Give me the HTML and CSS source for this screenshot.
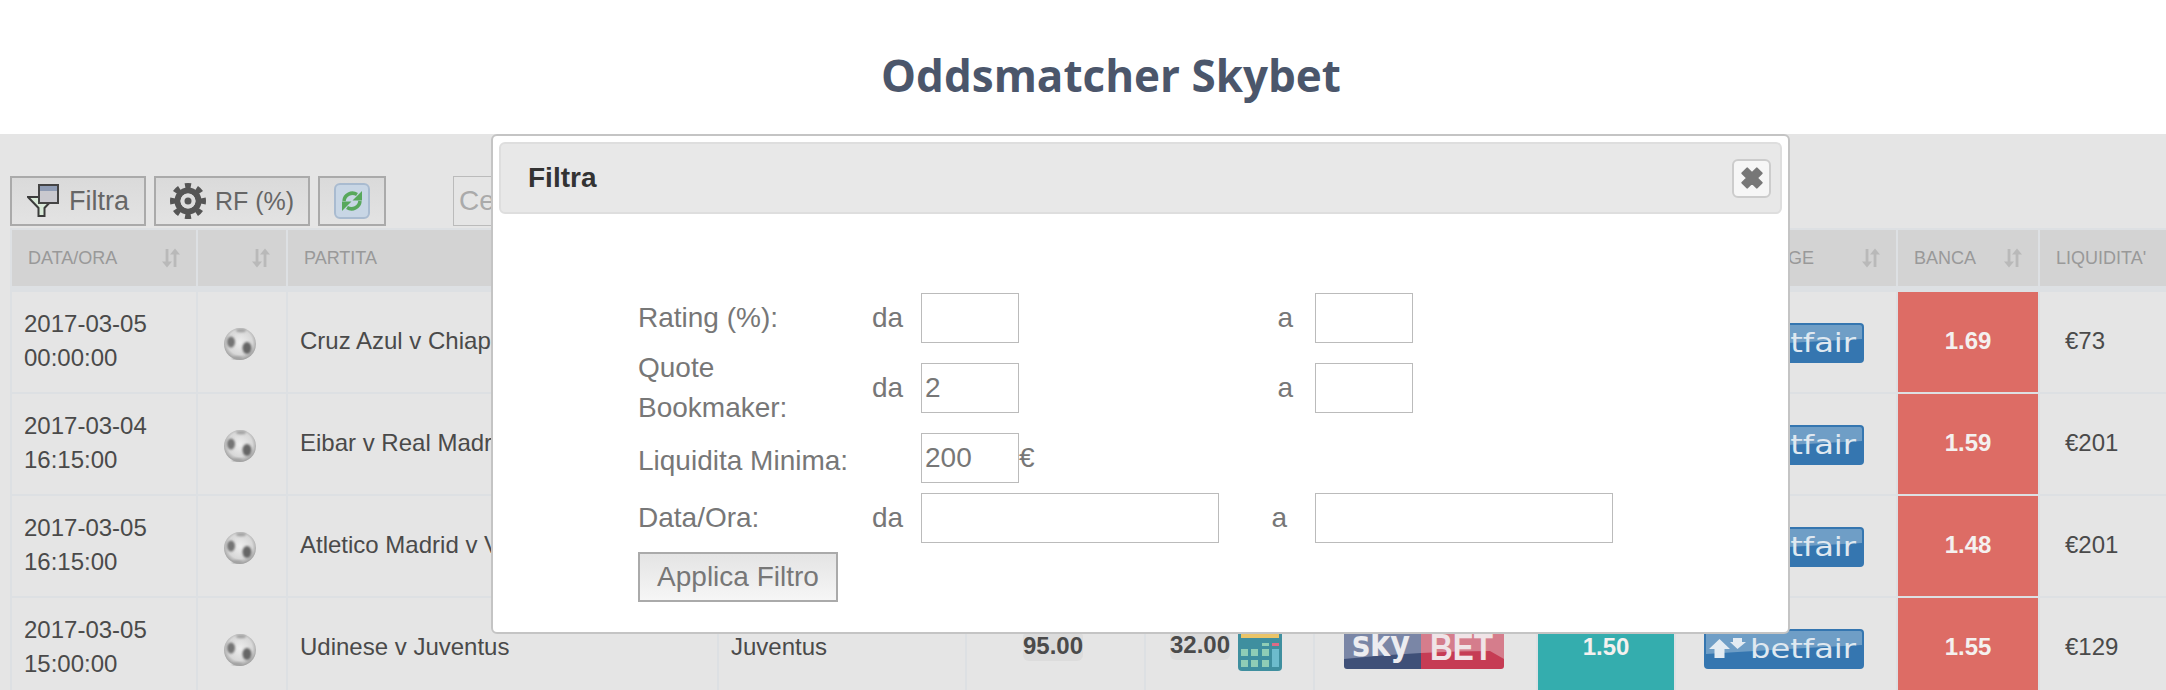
FILE: index.html
```html
<!DOCTYPE html>
<html lang="it">
<head>
<meta charset="utf-8">
<title>Oddsmatcher Skybet</title>
<link rel="stylesheet" href="styles.css">
</head>
<body>
<svg class="defs" width="0" height="0" aria-hidden="true">
  <defs>
    <radialGradient id="ballFill" cx="50%" cy="45%" r="55%">
      <stop offset="0" stop-color="#eeeeee"/>
      <stop offset="0.7" stop-color="#d8d8d8"/>
      <stop offset="1" stop-color="#9c9c9c"/>
    </radialGradient>
    <filter id="soft" x="-30%" y="-30%" width="160%" height="160%"><feGaussianBlur stdDeviation="1"/></filter>
    <symbol id="ball" viewBox="0 0 32 32">
      <circle cx="16" cy="16" r="16" fill="url(#ballFill)"/>
      <g filter="url(#soft)">
        <ellipse cx="7" cy="14" rx="4" ry="5.500" fill="#747474"/>
        <ellipse cx="23" cy="20" rx="4.500" ry="6" fill="#666"/>
        <ellipse cx="17" cy="2.500" rx="5" ry="1.800" fill="#a0a0a0"/>
        <ellipse cx="13" cy="30" rx="5" ry="1.600" fill="#a0a0a0"/>
      </g>
    </symbol>
    <symbol id="sort" viewBox="0 0 18 20">
      <path d="M3.600 1h2.800v12.500H10L5 19.500 0 13.500h3.600z" fill="#b9b9b9"/>
      <path d="M11.600 19h2.800V6.500H18L13 .5 8 6.500h3.600z" fill="#b9b9b9"/>
    </symbol>
    <symbol id="betfair" viewBox="0 0 160 40">
      <rect width="160" height="40" rx="4" fill="#3576b0"/>
      <path d="M2 2h154q2 0 2 2v12q-78 4-156 9z" fill="#6f9ec6"/>
      <path d="M15.500 10 26 20h-5.500v9h-10v-9H5z" fill="#e3ebf2"/>
      <path d="M29 9h9v4h4l-8.500 7L26 13h3z" fill="#e3ebf2"/>
      <text class="logo-bf" x="46" y="29" textLength="106" lengthAdjust="spacingAndGlyphs">betfair</text>
    </symbol>
    <symbol id="skybet" viewBox="0 0 160 40">
      <path d="M0 0h77v40H3q-3 0-3-3z" fill="#3f5078"/>
      <path d="M77 0h83v37q0 3-3 3H77z" fill="#c63c54"/>
      <path d="M0 0h77v24q-40 2-77 6z" fill="#7a86a6"/>
      <path d="M77 0h83v30l-14-8q-34 0-69 2z" fill="#d57d8c"/>
      <text class="logo-sky" x="8" y="27" textLength="58" lengthAdjust="spacingAndGlyphs">sky</text>
      <text class="logo-bet" x="86" y="31" textLength="63" lengthAdjust="spacingAndGlyphs">BET</text>
    </symbol>
  </defs>
</svg>

<header class="page-head">
  <h1 class="page-title">Oddsmatcher Skybet</h1>
</header>

<main class="content">
  <div class="toolbar">
    <button class="tool-btn tool-filter" type="button">
      <svg class="icon-funnel" width="32" height="34" viewBox="0 0 32 34">
        <path d="M1 13h27L17.500 24v8h-6v-8z" fill="#d9ead9" stroke="#3c3c3c" stroke-width="2"/>
        <rect x="12" y="1" width="19" height="18" fill="#c9c9cf" stroke="#444" stroke-width="2"/>
        <rect x="13" y="2" width="17" height="5" fill="#8f9cb4"/>
      </svg>
      <span>Filtra</span>
    </button>
    <button class="tool-btn tool-rf" type="button">
      <svg class="icon-gear" width="36" height="36" viewBox="0 0 36 36">
        <circle cx="18" cy="18" r="15.500" fill="none" stroke="#555" stroke-width="5" pathLength="80" stroke-dasharray="5 5" stroke-dashoffset="2.500"/>
        <circle cx="18" cy="18" r="10.500" fill="none" stroke="#555" stroke-width="6"/>
        <circle cx="18" cy="18" r="7.500" fill="#ddd"/>
        <circle cx="18" cy="18" r="3.500" fill="#555"/>
      </svg>
      <span>RF (%)</span>
    </button>
    <button class="tool-btn tool-refresh" type="button" aria-label="Aggiorna">
      <svg width="36" height="36" viewBox="0 0 36 36">
        <rect x="1" y="1" width="34" height="34" rx="5" fill="#c8d6e5" stroke="#a9bbd0" stroke-width="2"/>
        <g id="refreshHalf">
          <path d="M10 18A8.500 8.500 0 0 1 23 11.500" fill="none" stroke="#58a85c" stroke-width="3.500"/>
          <path d="M28 8v9.500h-9.500z" fill="#58a85c"/>
        </g>
        <use href="#refreshHalf" transform="rotate(180 18 18)"/>
      </svg>
    </button>
    <input class="search" type="text" placeholder="Cerca">
  </div>

  <table class="odds-table">
    <colgroup>
      <col class="c-date"><col class="c-sport"><col class="c-match"><col class="c-pick"><col class="c-back"><col class="c-lay"><col class="c-book"><col class="c-quote"><col class="c-exch"><col class="c-bank"><col class="c-liq">
    </colgroup>
    <thead>
      <tr>
        <th><div class="th-in"><span>DATA/ORA</span><svg class="sort"><use href="#sort"/></svg></div></th>
        <th><div class="th-in th-end"><svg class="sort"><use href="#sort"/></svg></div></th>
        <th><div class="th-in"><span>PARTITA</span></div></th>
        <th></th>
        <th></th>
        <th></th>
        <th></th>
        <th></th>
        <th><div class="th-in th-exch"><span>EXCHANGE</span><svg class="sort"><use href="#sort"/></svg></div></th>
        <th><div class="th-in"><span>BANCA</span><svg class="sort"><use href="#sort"/></svg></div></th>
        <th><div class="th-in"><span>LIQUIDITA'</span></div></th>
      </tr>
    </thead>
    <tbody>
      <tr>
        <td>2017-03-05<br>00:00:00</td>
        <td class="td-ball"><svg class="ball"><use href="#ball"/></svg></td>
        <td>Cruz Azul v Chiapas</td>
        <td></td><td></td><td></td><td></td><td></td>
        <td class="td-logo"><svg class="logo"><use href="#betfair"/></svg></td>
        <td class="td-bank">1.69</td>
        <td class="td-liq">€73</td>
      </tr>
      <tr>
        <td>2017-03-04<br>16:15:00</td>
        <td class="td-ball"><svg class="ball"><use href="#ball"/></svg></td>
        <td>Eibar v Real Madrid</td>
        <td></td><td></td><td></td><td></td><td></td>
        <td class="td-logo"><svg class="logo"><use href="#betfair"/></svg></td>
        <td class="td-bank">1.59</td>
        <td class="td-liq">€201</td>
      </tr>
      <tr>
        <td>2017-03-05<br>16:15:00</td>
        <td class="td-ball"><svg class="ball"><use href="#ball"/></svg></td>
        <td>Atletico Madrid v Valencia</td>
        <td></td><td></td><td></td><td></td><td></td>
        <td class="td-logo"><svg class="logo"><use href="#betfair"/></svg></td>
        <td class="td-bank">1.48</td>
        <td class="td-liq">€201</td>
      </tr>
      <tr>
        <td>2017-03-05<br>15:00:00</td>
        <td class="td-ball"><svg class="ball"><use href="#ball"/></svg></td>
        <td>Udinese v Juventus</td>
        <td>Juventus</td>
        <td class="td-back"><span class="odds">95.00</span></td>
        <td class="td-lay">
          <div class="lay-in">
            <span class="odds">32.00</span>
            <svg class="calc" viewBox="0 0 44 44">
              <rect width="44" height="44" rx="4" fill="#3f8f9f"/>
              <rect x="3" y="3" width="38" height="8" fill="#eac468"/>
              <rect x="24" y="16" width="7" height="3" fill="#8fcdb6"/>
              <rect x="34" y="16" width="7" height="3" fill="#dd6b86"/>
              <rect x="3" y="22" width="7" height="7" fill="#8fcdb6"/>
              <rect x="13" y="22" width="7" height="7" fill="#8fcdb6"/>
              <rect x="24" y="22" width="7" height="7" fill="#8fcdb6"/>
              <rect x="3" y="33" width="7" height="7" fill="#8fcdb6"/>
              <rect x="13" y="33" width="7" height="7" fill="#8fcdb6"/>
              <rect x="24" y="33" width="7" height="7" fill="#8fcdb6"/>
              <rect x="34" y="22" width="7" height="18" fill="#6dbccd"/>
            </svg>
          </div>
        </td>
        <td class="td-sky"><svg class="logo"><use href="#skybet"/></svg></td>
        <td class="td-quote">1.50</td>
        <td class="td-logo"><svg class="logo"><use href="#betfair"/></svg></td>
        <td class="td-bank">1.55</td>
        <td class="td-liq">€129</td>
      </tr>
    </tbody>
  </table>
</main>

<section class="modal">
  <div class="modal-bar">
    <h2 class="modal-title">Filtra</h2>
    <button class="modal-close" type="button" aria-label="Chiudi">
      <svg width="22" height="22" viewBox="2 2 16 16"><path d="M3 6.500 6.500 3 10 6.500 13.500 3 17 6.500 13.500 10 17 13.500 13.500 17 10 13.500 6.500 17 3 13.500 6.500 10z" fill="#777" stroke="#777" stroke-width="1.500" stroke-linejoin="round"/></svg>
    </button>
  </div>
  <form class="modal-body">
    <div class="filter-grid">
      <span>Rating (%):</span>
      <span>da</span>
      <span class="cell-mid"><input class="fld fld-s" type="text"><span class="to">a</span></span>
      <input class="fld fld-s" type="text">

      <span>Quote<br>Bookmaker:</span>
      <span>da</span>
      <span class="cell-mid"><input class="fld fld-s" type="text" value="2"><span class="to">a</span></span>
      <input class="fld fld-s" type="text">

      <span>Liquidita Minima:</span>
      <span></span>
      <span class="cell-top"><input class="fld fld-s" type="text" value="200"><span>€</span></span>
      <span></span>

      <span>Data/Ora:</span>
      <span>da</span>
      <span class="cell-mid"><input class="fld fld-l" type="text"><span class="to to-wide">a</span></span>
      <input class="fld fld-l" type="text">
    </div>
    <button class="apply" type="button">Applica Filtro</button>
  </form>
</section>
</body>
</html>
```

FILE: styles.css
```css
* { box-sizing: border-box; }

html, body {
  margin: 0;
  height: 690px;
  overflow: hidden;
  background: #fff;
  font-family: "Liberation Sans", Arial, sans-serif;
}

.defs { position: absolute; }

.page-head {
  height: 134px;
  padding: 16px 0 0 56px;
  display: flex;
  align-items: center;
  justify-content: center;
}

.page-title {
  margin: 0;
  font: 700 44px/1.2 "Open Sans", sans-serif;
  color: #4b566b;
}

.content {
  height: 556px;
  overflow: hidden;
  background: #e5e5e5;
  padding: 42px 0 0 10px;
}

.toolbar {
  display: flex;
  align-items: center;
  gap: 8px;
  height: 50px;
  margin-bottom: 2px;
}

.tool-btn {
  height: 50px;
  display: flex;
  align-items: center;
  padding: 0;
  border: 2px solid #aaa;
  background: linear-gradient(#dadada, #e3e3e3);
  color: #666;
  font-family: inherit;
}

.tool-filter { width: 136px; font-size: 27px; padding-left: 15px; gap: 10px; }
.tool-rf { width: 156px; font-size: 25px; padding-left: 14px; gap: 9px; }
.tool-refresh { width: 68px; justify-content: center; }

.icon-gear { flex: none; }

.search {
  width: 400px;
  height: 50px;
  margin-left: 59px;
  padding: 0 5px;
  border: 1px solid #bbb;
  background: #e5e5e5;
  font: 28px "Liberation Sans", Arial, sans-serif;
}

.search::placeholder { color: #aaa; opacity: 1; }

.odds-table {
  width: 2160px;
  table-layout: fixed;
  border-collapse: separate;
  border-spacing: 2px;
  background: #dde0e3;
  color: #4a4a4a;
  font-size: 24px;
  line-height: 34px;
}

.c-date { width: 184px; }
.c-sport { width: 88px; }
.c-match { width: 429px; }
.c-pick { width: 246px; }
.c-back { width: 177px; }
.c-lay { width: 167px; }
.c-book { width: 221px; }
.c-quote { width: 136px; }
.c-exch { width: 220px; }
.c-bank { width: 140px; }
.c-liq { width: 128px; }

.odds-table th {
  height: 60px;
  padding: 0;
  border-bottom: 4px solid #dde0e3;
  background-clip: padding-box;
  background-color: #d3d3d3;
  font-size: 18px;
  font-weight: 400;
  color: #999;
  text-align: left;
}

.th-in {
  display: flex;
  align-items: center;
  justify-content: space-between;
  padding: 0 16px;
}

.th-end { justify-content: flex-end; }
.th-exch { padding-left: 37px; }

.sort { width: 18px; height: 20px; flex: none; }

.odds-table td {
  height: 100px;
  padding: 0 12px 2px;
  background: #e5e5e5;
  vertical-align: middle;
}

.odds-table .td-ball { padding: 4px 0 0 26px; }
.ball { display: block; width: 32px; height: 32px; }

.odds-table .td-back { padding-left: 56px; }
.odds-table .td-lay { padding-left: 24px; }
.odds-table .td-sky { padding-left: 29px; }
.odds-table .td-logo { padding-left: 28px; }

.logo { display: block; width: 160px; height: 40px; margin-top: 3px; }
.logo-bf { font: 400 27px "DejaVu Sans", sans-serif; fill: #dfe8f0; }
.logo-sky { font: 700 36px "DejaVu Sans", sans-serif; fill: #ececf0; }
.logo-bet { font: 700 36px "Liberation Sans", sans-serif; fill: #f0e4e7; }

.odds {
  display: inline-block;
  height: 30px;
  line-height: 30px;
  margin-bottom: 4px;
  border-radius: 6px;
  background: #dcdcdc;
  font-weight: 700;
}

.lay-in { display: flex; align-items: center; gap: 8px; }
.calc { width: 44px; height: 44px; flex: none; margin-top: 4px; }

.odds-table .td-bank,
.odds-table .td-quote {
  padding: 0 0 2px;
  text-align: center;
  font-weight: 700;
  color: #f4f1ef;
}

.odds-table .td-bank { background: #dd6c65; }
.odds-table .td-quote { background: #34adae; }
.odds-table .td-liq { padding-left: 25px; }

/* Dialog sits above the page */
.modal {
  position: absolute;
  left: 491px;
  top: 134px;
  width: 1299px;
  height: 500px;
  padding: 6px 6px 0;
  background: #fff;
  border: 2px solid #c4c4c4;
  border-radius: 6px;
}

.modal-bar {
  height: 72px;
  display: flex;
  align-items: center;
  justify-content: space-between;
  padding: 0 9px 0 27px;
  background: #e8e8e8;
  border: 2px solid #dedede;
  border-radius: 6px;
}

.modal-title {
  margin: 0;
  font-size: 28px;
  font-weight: 700;
  color: #333;
}

.modal-close {
  width: 39px;
  height: 39px;
  display: flex;
  align-items: center;
  justify-content: center;
  padding: 0;
  background: #f6f6f6;
  border: 2px solid #ccc;
  border-radius: 6px;
}

.modal-body {
  padding: 79px 0 0 139px;
  color: #777;
  font-size: 28px;
}

.filter-grid {
  display: grid;
  grid-template-columns: 234px 49px 394px 298px;
  grid-template-rows: 50px 80px 55px 50px;
  row-gap: 5px;
  align-items: center;
  line-height: 40px;
}

.cell-mid { display: flex; align-items: center; justify-content: space-between; }
.cell-top { display: flex; align-items: center; align-self: start; height: 50px; }

.to { padding-right: 22px; }
.to-wide { padding-right: 28px; }

.fld {
  height: 50px;
  padding: 0 3px;
  background: #fff;
  border: 1px solid #bbb;
  color: #777;
  font: 28px "Liberation Sans", Arial, sans-serif;
}

.fld-s { width: 98px; }
.fld-l { width: 298px; }

.apply {
  display: block;
  width: 200px;
  height: 50px;
  margin-top: 9px;
  padding: 0;
  border: 2px solid #aaa;
  background: linear-gradient(#e4e4e4, #f6f6f6);
  color: #777;
  font: 28px "Liberation Sans", Arial, sans-serif;
}
```
